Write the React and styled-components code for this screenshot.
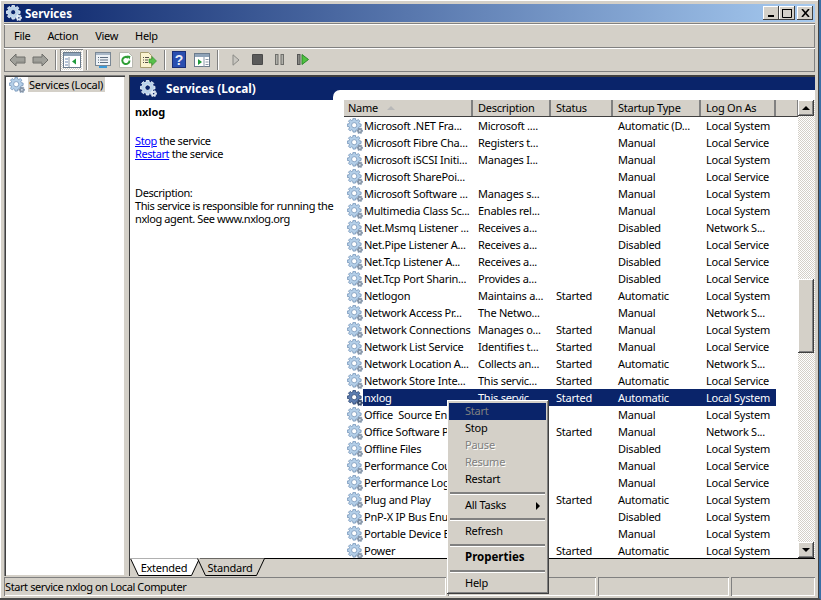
import React from "react";
import styled, { createGlobalStyle } from "styled-components";

const FONT = `"Noto Sans", "Liberation Sans", sans-serif`;

const Global = createGlobalStyle`
  html, body {
    margin: 0;
    padding: 0;
    overflow: hidden;
    background: #3a6ea5;
  }
`;

const rows = [
  ["Microsoft .NET Fra...", "Microsoft ....", "", "Automatic (D...", "Local System"],
  ["Microsoft Fibre Cha...", "Registers t...", "", "Manual", "Local Service"],
  ["Microsoft iSCSI Initi...", "Manages I...", "", "Manual", "Local System"],
  ["Microsoft SharePoi...", "", "", "Manual", "Local Service"],
  ["Microsoft Software ...", "Manages s...", "", "Manual", "Local System"],
  ["Multimedia Class Sc...", "Enables rel...", "", "Manual", "Local System"],
  ["Net.Msmq Listener ...", "Receives a...", "", "Disabled", "Network S..."],
  ["Net.Pipe Listener A...", "Receives a...", "", "Disabled", "Local Service"],
  ["Net.Tcp Listener A...", "Receives a...", "", "Disabled", "Local Service"],
  ["Net.Tcp Port Sharin...", "Provides a...", "", "Disabled", "Local Service"],
  ["Netlogon", "Maintains a...", "Started", "Automatic", "Local System"],
  ["Network Access Pr...", "The Netwo...", "", "Manual", "Network S..."],
  ["Network Connections", "Manages o...", "Started", "Manual", "Local System"],
  ["Network List Service", "Identifies t...", "Started", "Manual", "Local Service"],
  ["Network Location A...", "Collects an...", "Started", "Automatic", "Network S..."],
  ["Network Store Inte...", "This servic...", "Started", "Automatic", "Local Service"],
  ["nxlog", "This servic...", "Started", "Automatic", "Local System"],
  ["Office  Source En...", "", "", "Manual", "Local System"],
  ["Office Software P...", "", "Started", "Manual", "Network S..."],
  ["Offline Files", "", "", "Disabled", "Local System"],
  ["Performance Cou...", "", "", "Manual", "Local Service"],
  ["Performance Log...", "", "", "Manual", "Local Service"],
  ["Plug and Play", "", "Started", "Automatic", "Local System"],
  ["PnP-X IP Bus Enu...", "", "", "Disabled", "Local System"],
  ["Portable Device E...", "", "", "Manual", "Local System"],
  ["Power", "", "Started", "Automatic", "Local System"],
];

const columns = [
  { label: "Name", width: 129 },
  { label: "Description", width: 78 },
  { label: "Status", width: 62 },
  { label: "Startup Type", width: 88 },
  { label: "Log On As", width: 75 },
];

const gearPath = (cx, cy, outer, inner, hole, teeth) => {
  const pts = [];
  for (let i = 0; i < teeth; i++) {
    const step = (Math.PI * 2) / teeth;
    const a = i * step;
    const w = step * 0.22;
    [[a - w * 1.5, inner], [a - w, outer], [a + w, outer], [a + w * 1.5, inner]].forEach(([t, r]) => {
      pts.push(`${(cx + Math.cos(t) * r).toFixed(2)} ${(cy + Math.sin(t) * r).toFixed(2)}`);
    });
  }
  const ring = `M${cx - hole} ${cy}a${hole} ${hole} 0 1 0 ${hole * 2} 0a${hole} ${hole} 0 1 0 ${-hole * 2} 0z`;
  return `M${pts.join("L")}z${ring}`;
};

const BIG_GEAR = gearPath(7.2, 7.2, 7, 5.4, 2.6, 8);
const SMALL_GEAR = gearPath(12.8, 12.8, 3.1, 2.3, 1, 6);

const GearSvg = styled.svg`
  flex: none;
  display: block;
`;

const GearIcon = ({ tone = "light", size = 16 }) => {
  const palette = {
    light: ["#b4cfe8", "#7393b8", "#8c96a2"],
    dark: ["#5c7db0", "#26406f", "#3a4a66"],
    white: ["#b9d2ea", "#f4f8fc", "#dfe8f2"],
  }[tone];
  return (
    <GearSvg width={size} height={size} viewBox="0 0 16 16">
      <path d={BIG_GEAR} fill={palette[0]} stroke={palette[1]} strokeWidth="0.8" fillRule="evenodd" />
      <path d={SMALL_GEAR} fill={palette[2]} stroke={palette[1]} strokeWidth="0.4" fillRule="evenodd" />
    </GearSvg>
  );
};

const Window = styled.div`
  width: 821px;
  height: 600px;
  box-sizing: border-box;
  padding: 4px 4px 2px 4px;
  display: flex;
  flex-direction: column;
  background: #d4d0c8;
  border-right: 2px solid #3a6ea5;
  border-bottom: 2px solid #4a4a4a;
  font-family: ${FONT};
  font-size: 11px;
  letter-spacing: -0.25px;
  color: #000;
  box-shadow: inset -1px 0 0 #404040, inset 1px 1px 0 #ffffff;
`;

const TitleBar = styled.div`
  height: 18px;
  flex: none;
  display: flex;
  align-items: center;
  padding: 0 2px;
  gap: 3px;
  background: linear-gradient(90deg, #0a246a, #a6caf0);
  color: #fff;
  font-weight: 700;
  font-size: 11.5px;
  letter-spacing: 0;
`;

const TitleText = styled.span`
  flex: 1;
`;

const WinButton = styled.div`
  width: 16px;
  height: 14px;
  box-sizing: border-box;
  background: #d4d0c8;
  box-shadow: inset -1px -1px 0 #404040, inset 1px 1px 0 #fff;
  display: flex;
  align-items: center;
  justify-content: center;
  margin-left: ${(p) => (p.$gap ? "-1px" : "-3px")};
`;

const MenuBar = styled.div`
  height: 24px;
  flex: none;
  margin-top: 1px;
  display: flex;
  align-items: center;
  padding-left: 10px;
  gap: 17px;
  letter-spacing: -0.3px;
  box-shadow: inset 0 1px 0 #808080, inset 0 2px 0 #fff, inset 1px 0 0 #808080, inset -1px 0 0 #808080;
`;

const ToolBar = styled.div`
  height: 25px;
  flex: none;
  display: flex;
  align-items: center;
  padding-left: 2px;
  box-shadow: inset 0 1px 0 #808080, inset 0 2px 0 #fff, inset 0 -1px 0 #808080, inset 1px 0 0 #808080, inset -1px 0 0 #808080;
`;

const ToolIcon = styled.div`
  width: ${(p) => p.$w || 23}px;
  height: 22px;
  flex: none;
  display: flex;
  align-items: center;
  justify-content: center;
  box-sizing: border-box;
  ${(p) =>
    p.$pressed &&
    `background: repeating-conic-gradient(#ffffff 0 25%, #d4d0c8 0 50%) 0 0 / 2px 2px;
     box-shadow: inset 1px 1px 0 #808080, inset -1px -1px 0 #fff;`}
`;

const ToolSep = styled.div`
  width: 1px;
  height: 20px;
  flex: none;
  margin: 0 ${(p) => p.$r || 3}px 0 ${(p) => p.$l || 3}px;
  background: #808080;
  box-shadow: 1px 0 0 #fff;
`;

const Panes = styled.div`
  flex: 1;
  min-height: 0;
  display: flex;
  margin-top: 3px;
  gap: 4px;
`;

const TreePane = styled.div`
  width: 121px;
  flex: none;
  box-sizing: border-box;
  background: #fff;
  padding: 2px 5px;
  box-shadow: inset 1px 1px 0 #808080, inset 2px 2px 0 #404040, inset -1px -1px 0 #d4d0c8, inset -2px -2px 0 #fff;
  display: flex;
  align-items: flex-start;
  gap: 3px;
`;

const TreeLabel = styled.span`
  background: #d4d0c8;
  padding: 0 2px 0 1px;
  line-height: 15px;
  white-space: nowrap;
`;

const MainPane = styled.div`
  flex: 1;
  min-width: 0;
  display: flex;
  flex-direction: column;
  border-left: 1px solid #404040;
  border-top: 2px solid #404040;
`;

const PaneHeader = styled.div`
  position: relative;
  height: 23px;
  flex: none;
  background: #0a246a;
  color: #fff;
  font-weight: 700;
  font-size: 11.8px;
  letter-spacing: 0;
  display: flex;
  align-items: flex-start;
  padding: 3px 0 0 10px;
  box-sizing: border-box;
  gap: 9px;
  line-height: 17px;
`;

const HeaderNotch = styled.div`
  position: absolute;
  left: 203px;
  right: 0;
  bottom: 0;
  height: 10px;
  background: #fff;
  border-top-left-radius: 7px;
`;

const PaneBody = styled.div`
  flex: 1;
  min-height: 0;
  display: flex;
  background: #fff;
  overflow: hidden;
`;

const DetailPanel = styled.div`
  width: 214px;
  flex: none;
  box-sizing: border-box;
  padding: 5px 0 0 5px;
  line-height: 13px;
  white-space: nowrap;
  letter-spacing: -0.4px;
`;

const DetailName = styled.div`
  font-weight: 700;
  margin-bottom: 15px;
  line-height: 14px;
  letter-spacing: -0.1px;
`;

const ActionLine = styled.div`
  a {
    color: #0000ff;
    text-decoration: underline;
  }
`;

const DetailText = styled.div`
  margin-top: 26px;
`;

const ListPanel = styled.div`
  flex: 1;
  min-width: 0;
  display: flex;
`;

const ListColumn = styled.div`
  flex: 1;
  min-width: 0;
  display: flex;
  flex-direction: column;
`;

const HeaderRow = styled.div`
  height: 17px;
  flex: none;
  display: flex;
  background: #d4d0c8;
  border-bottom: 1px solid #404040;
  box-sizing: border-box;
`;

const HeaderCell = styled.div`
  width: ${(p) => p.$w}px;
  flex: none;
  box-sizing: border-box;
  padding-left: ${(p) => (p.$first ? 4 : 5)}px;
  line-height: 16px;
  display: flex;
  align-items: center;
  gap: 9px;
  border-right: 2px solid #808080;
`;

const HeaderFill = styled.div`
  flex: 1;
  border-right: 1px solid #808080;
`;

const SortArrow = styled.span`
  width: 0;
  height: 0;
  border-left: 4px solid transparent;
  border-right: 4px solid transparent;
  border-bottom: 4px solid #b8b8b8;
`;

const Row = styled.div`
  height: 17px;
  flex: none;
  display: flex;
  align-items: center;
  white-space: pre;
`;

const NameCell = styled.div`
  width: 129px;
  flex: none;
  display: flex;
  align-items: center;
  padding-left: 3px;
  box-sizing: border-box;
  height: 17px;
`;

const Label = styled.span`
  flex: 1;
  min-width: 0;
  padding-left: 1px;
  line-height: 17px;
  height: 17px;
  ${(p) => p.$selected && "background: #0a246a; color: #fff;"}
`;

const Cell = styled.div`
  width: ${(p) => p.$w}px;
  flex: none;
  box-sizing: border-box;
  padding-left: 5px;
  line-height: 17px;
  height: 17px;
  ${(p) => p.$selected && "background: #0a246a; color: #fff;"}
`;

const ScrollBar = styled.div`
  width: 17px;
  flex: none;
  display: flex;
  flex-direction: column;
  padding-right: 1px;
  box-sizing: border-box;
  background: repeating-conic-gradient(#ffffff 0 25%, #d4d0c8 0 50%) 0 0 / 2px 2px;
`;

const ScrollButton = styled.div`
  height: 16px;
  flex: none;
  box-sizing: border-box;
  background: #d4d0c8;
  box-shadow: inset -1px -1px 0 #404040, inset 1px 1px 0 #fff, inset -2px -2px 0 #808080;
  display: flex;
  align-items: center;
  justify-content: center;
`;

const ScrollArrow = styled.span`
  width: 0;
  height: 0;
  border-left: 4px solid transparent;
  border-right: 4px solid transparent;
  ${(p) => (p.$down ? "border-top: 4px solid #000;" : "border-bottom: 4px solid #000;")}
`;

const ScrollThumb = styled.div`
  height: 74px;
  margin-top: 163px;
  flex: none;
  background: #d4d0c8;
  box-shadow: inset -1px -1px 0 #404040, inset 1px 1px 0 #fff, inset -2px -2px 0 #808080;
`;

const ScrollGap = styled.div`
  flex: 1;
`;

const TabStrip = styled.div`
  height: 17px;
  flex: none;
  display: flex;
  background: #d4d0c8;
  border-top: 1px solid #000;
`;

const Tab = styled.div`
  position: relative;
  width: ${(p) => p.$w}px;
  margin-top: -1px;
  height: 18px;
  flex: none;
  margin-left: ${(p) => p.$shift || 0}px;
  display: flex;
  align-items: center;
  justify-content: center;
  padding: 1px 2px 0 0;
  box-sizing: border-box;
  svg {
    position: absolute;
    left: 0;
    top: 0;
  }
  span {
    position: relative;
  }
`;

const StatusBar = styled.div`
  height: 19px;
  flex: none;
  margin-top: 1px;
  display: flex;
  gap: 2px;
`;

const StatusCell = styled.div`
  flex: ${(p) => (p.$w ? `0 0 ${p.$w}px` : 1)};
  box-sizing: border-box;
  padding-left: 1px;
  line-height: 19px;
  letter-spacing: -0.4px;
  box-shadow: inset 1px 1px 0 #808080, inset -1px -1px 0 #fff;
`;

const ContextMenu = styled.div`
  position: absolute;
  left: 447px;
  top: 400px;
  width: 102px;
  height: 194px;
  box-sizing: border-box;
  padding: 3px 3px 0 2px;
  background: #d4d0c8;
  box-shadow: inset -1px -1px 0 #404040, inset 1px 1px 0 #fff, inset -2px -2px 0 #808080;
  z-index: 5;
`;

const MenuItem = styled.div`
  height: 17px;
  line-height: 16px;
  padding-left: 16px;
  position: relative;
  font-weight: ${(p) => (p.$bold ? 700 : 400)};
  font-size: ${(p) => (p.$bold ? "11.5px" : "11px")};
  letter-spacing: ${(p) => (p.$bold ? "0" : "-0.25px")};
  color: ${(p) => (p.$disabled ? "#808080" : "#000")};
  ${(p) => p.$active && "background: #0a246a;"}
  ${(p) => p.$disabled && !p.$active && "text-shadow: 1px 1px 0 #fff;"}
`;

const MenuRule = styled.div`
  height: 1px;
  margin: 4px 1px 3px;
  background: #808080;
  box-shadow: 0 1px 0 #fff;
  padding-bottom: 1px;
`;

const SubArrow = styled.span`
  position: absolute;
  right: 6px;
  top: 5px;
  width: 0;
  height: 0;
  border-top: 4px solid transparent;
  border-bottom: 4px solid transparent;
  border-left: 4px solid #000;
`;

const ArrowSvg = styled.svg`
  ${(p) => p.$flip && "transform: scaleX(-1);"}
`;

const ArrowIcon = ({ flip }) => (
  <ArrowSvg $flip={flip} width="17" height="14" viewBox="0 0 17 14">
    <path d="M1 7 7 1v3h9v6H7v3z" fill="#a0a09a" stroke="#6e6e6a" />
    <path d="M7 9h8" stroke="#8a8a84" />
  </ArrowSvg>
);

const TreeToggleIcon = () => (
  <svg width="18" height="16" viewBox="0 0 18 16">
    <rect x="0.5" y="0.5" width="17" height="15" fill="#fff" stroke="#6b7b8c" />
    <rect x="1" y="1" width="16" height="3" fill="#8fa3b8" />
    <path d="M6 5v10" stroke="#8a98a8" />
    <path d="M13 6.5v6l-4-3z" fill="#1f9a3a" />
    <path d="M2 7h3M2 10h3M2 13h3" stroke="#6f88b0" />
  </svg>
);

const PropsIcon = () => (
  <svg width="16" height="16" viewBox="0 0 16 16">
    <rect x="0.5" y="0.5" width="15" height="13" fill="#eef2f6" stroke="#7a8794" />
    <rect x="1" y="1" width="14" height="2" fill="#a9b8c8" />
    <path d="M3 5.5h1M5 5.5h8M3 8h1M5 8h8M3 10.5h1M5 10.5h8" stroke="#5d6d80" />
    <rect x="4" y="14" width="8" height="2" fill="#3a9ad9" />
  </svg>
);

const RefreshIcon = () => (
  <svg width="14" height="16" viewBox="0 0 14 16">
    <path d="M.5.5h9l4 4v11H.5z" fill="#fff" stroke="#b8b8b0" />
    <path d="M10.5 8.5a3.6 3.6 0 1 1-1.2-2.7" fill="none" stroke="#2f9e35" strokeWidth="2" />
    <path d="M8 3.5l3.5.5-1 3.5z" fill="#2f9e35" />
  </svg>
);

const ExportIcon = () => (
  <svg width="17" height="16" viewBox="0 0 17 16">
    <path d="M.5.5h8l3 3v12h-11z" fill="#fbf3cf" stroke="#a89e70" />
    <path d="M3 5.5h1M5 5.5h4M3 8h1M5 8h3M3 10.5h1M5 10.5h3" stroke="#55504a" />
    <path d="M9 7h3V4.5L16.5 9 12 13.5V11H9z" fill="#58c04a" stroke="#2d8a2d" strokeWidth="0.6" />
  </svg>
);

const HelpIcon = () => (
  <svg width="14" height="17" viewBox="0 0 14 17">
    <rect width="14" height="17" fill="#2a4fb0" />
    <rect x="0.5" y="0.5" width="13" height="16" fill="none" stroke="#1a2f78" />
    <text x="7" y="13.5" fontSize="14" fontWeight="700" fill="#e8ecf8" textAnchor="middle" fontFamily="Liberation Sans">?</text>
  </svg>
);

const ActionPaneIcon = () => (
  <svg width="16" height="14" viewBox="0 0 16 14">
    <rect x="0.5" y="0.5" width="15" height="13" fill="#fff" stroke="#6b7b8c" />
    <rect x="1" y="1" width="14" height="3" fill="#8fa3b8" />
    <path d="M10 4v10" stroke="#8a98a8" />
    <path d="M4 6v6l4-3z" fill="#1f9a3a" />
    <path d="M11.5 6.5h3M11.5 9h3M11.5 11.5h3" stroke="#8a98a8" />
  </svg>
);

const PlayIcon = () => (
  <svg width="8" height="12" viewBox="0 0 8 12">
    <path d="M1 .8 7 6 1 11.2z" fill="#c8c6c0" stroke="#8a8a86" />
  </svg>
);

const StopIcon = () => (
  <svg width="11" height="11" viewBox="0 0 11 11">
    <rect width="11" height="11" rx="1" fill="#4a4a4a" />
    <rect x="1" y="1" width="9" height="9" fill="#5a5a5a" />
  </svg>
);

const PauseIcon = () => (
  <svg width="9" height="11" viewBox="0 0 9 11">
    <rect x="0.5" y="0.5" width="2.5" height="10" fill="#b0b0aa" stroke="#6e6e6a" />
    <rect x="6" y="0.5" width="2.5" height="10" fill="#b0b0aa" stroke="#6e6e6a" />
  </svg>
);

const ResumeIcon = () => (
  <svg width="12" height="11" viewBox="0 0 12 11">
    <rect x="0.5" y="0.5" width="2.5" height="10" fill="#8a8a86" stroke="#555" />
    <path d="M5 .5 11.5 5.5 5 10.5z" fill="#4fc23f" stroke="#2d8a2d" />
  </svg>
);

const TabShape = ({ w, active }) => (
  <svg width={w} height="18" viewBox={`0 0 ${w} 18`}>
    <path
      d={`M0.5 0.5 L8.5 17.5 H${w - 8.5} L${w - 0.5} 0.5`}
      fill={active ? "#fff" : "#d4d0c8"}
      stroke="#000"
    />
    {active && <path d={`M0 0.5H${w}`} stroke="#b0b0b0" />}
  </svg>
);

export default function App() {
  return (
    <Window>
      <Global />
      <TitleBar>
        <GearIcon tone="white" />
        <TitleText>Services</TitleText>
        <WinButton>
          <svg width="8" height="8" viewBox="0 0 8 8"><rect x="1" y="6" width="6" height="2" fill="#000" /></svg>
        </WinButton>
        <WinButton>
          <svg width="10" height="10" viewBox="0 0 10 10"><path d="M.5 1.5h9v8h-9z" fill="none" stroke="#000" /><path d="M0 1.5h10" stroke="#000" /></svg>
        </WinButton>
        <WinButton $gap>
          <svg width="9" height="8" viewBox="0 0 9 8"><path d="M1 0l7 8M8 0 1 8" stroke="#000" strokeWidth="1.6" fill="none" /></svg>
        </WinButton>
      </TitleBar>
      <MenuBar>
        <span>File</span>
        <span>Action</span>
        <span>View</span>
        <span>Help</span>
      </MenuBar>
      <ToolBar>
        <ToolIcon><ArrowIcon /></ToolIcon>
        <ToolIcon><ArrowIcon flip /></ToolIcon>
        <ToolSep $l={3} $r={4} />
        <ToolIcon $pressed><TreeToggleIcon /></ToolIcon>
        <ToolSep $l={3} $r={4} />
        <ToolIcon><PropsIcon /></ToolIcon>
        <ToolIcon><RefreshIcon /></ToolIcon>
        <ToolIcon><ExportIcon /></ToolIcon>
        <ToolSep $l={4} $r={2} />
        <ToolIcon><HelpIcon /></ToolIcon>
        <ToolIcon><ActionPaneIcon /></ToolIcon>
        <ToolSep $l={4} $r={6} />
        <ToolIcon><PlayIcon /></ToolIcon>
        <ToolIcon $w={21}><StopIcon /></ToolIcon>
        <ToolIcon><PauseIcon /></ToolIcon>
        <ToolIcon><ResumeIcon /></ToolIcon>
      </ToolBar>
      <Panes>
        <TreePane>
          <GearIcon />
          <TreeLabel>Services (Local)</TreeLabel>
        </TreePane>
        <MainPane>
          <PaneHeader>
            <GearIcon tone="white" size={17} />
            <span>Services (Local)</span>
            <HeaderNotch />
          </PaneHeader>
          <PaneBody>
            <DetailPanel>
              <DetailName>nxlog</DetailName>
              <ActionLine><a>Stop</a> the service</ActionLine>
              <ActionLine><a>Restart</a> the service</ActionLine>
              <DetailText>
                Description:
                <br />
                This service is responsible for running the
                <br />
                nxlog agent. See www.nxlog.org
              </DetailText>
            </DetailPanel>
            <ListPanel>
              <ListColumn>
                <HeaderRow>
                  {columns.map((c, i) => (
                    <HeaderCell key={c.label} $w={c.width} $first={i === 0}>
                      {c.label}
                      {i === 0 && <SortArrow />}
                    </HeaderCell>
                  ))}
                  <HeaderFill />
                </HeaderRow>
                {rows.map((r) => {
                  const selected = r[0] === "nxlog";
                  return (
                    <Row key={r[0]}>
                      <NameCell>
                        <GearIcon tone={selected ? "dark" : "light"} />
                        <Label $selected={selected}>{r[0]}</Label>
                      </NameCell>
                      {columns.slice(1).map((c, i) => (
                        <Cell key={c.label} $w={c.width} $selected={selected}>
                          {r[i + 1]}
                        </Cell>
                      ))}
                    </Row>
                  );
                })}
              </ListColumn>
              <ScrollBar>
                <ScrollButton><ScrollArrow /></ScrollButton>
                <ScrollThumb />
                <ScrollGap />
                <ScrollButton><ScrollArrow $down /></ScrollButton>
              </ScrollBar>
            </ListPanel>
          </PaneBody>
          <TabStrip>
            <Tab $w={70}>
              <TabShape w={70} active />
              <span>Extended</span>
            </Tab>
            <Tab $w={68} $shift={-3}>
              <TabShape w={68} />
              <span>Standard</span>
            </Tab>
          </TabStrip>
        </MainPane>
      </Panes>
      <StatusBar>
        <StatusCell>Start service nxlog on Local Computer</StatusCell>
        <StatusCell $w={148} />
        <StatusCell $w={131} />
        <StatusCell $w={84} />
      </StatusBar>
      <ContextMenu>
        <MenuItem $disabled $active>Start</MenuItem>
        <MenuItem>Stop</MenuItem>
        <MenuItem $disabled>Pause</MenuItem>
        <MenuItem $disabled>Resume</MenuItem>
        <MenuItem>Restart</MenuItem>
        <MenuRule />
        <MenuItem>All Tasks<SubArrow /></MenuItem>
        <MenuRule />
        <MenuItem>Refresh</MenuItem>
        <MenuRule />
        <MenuItem $bold>Properties</MenuItem>
        <MenuRule />
        <MenuItem>Help</MenuItem>
      </ContextMenu>
    </Window>
  );
}
